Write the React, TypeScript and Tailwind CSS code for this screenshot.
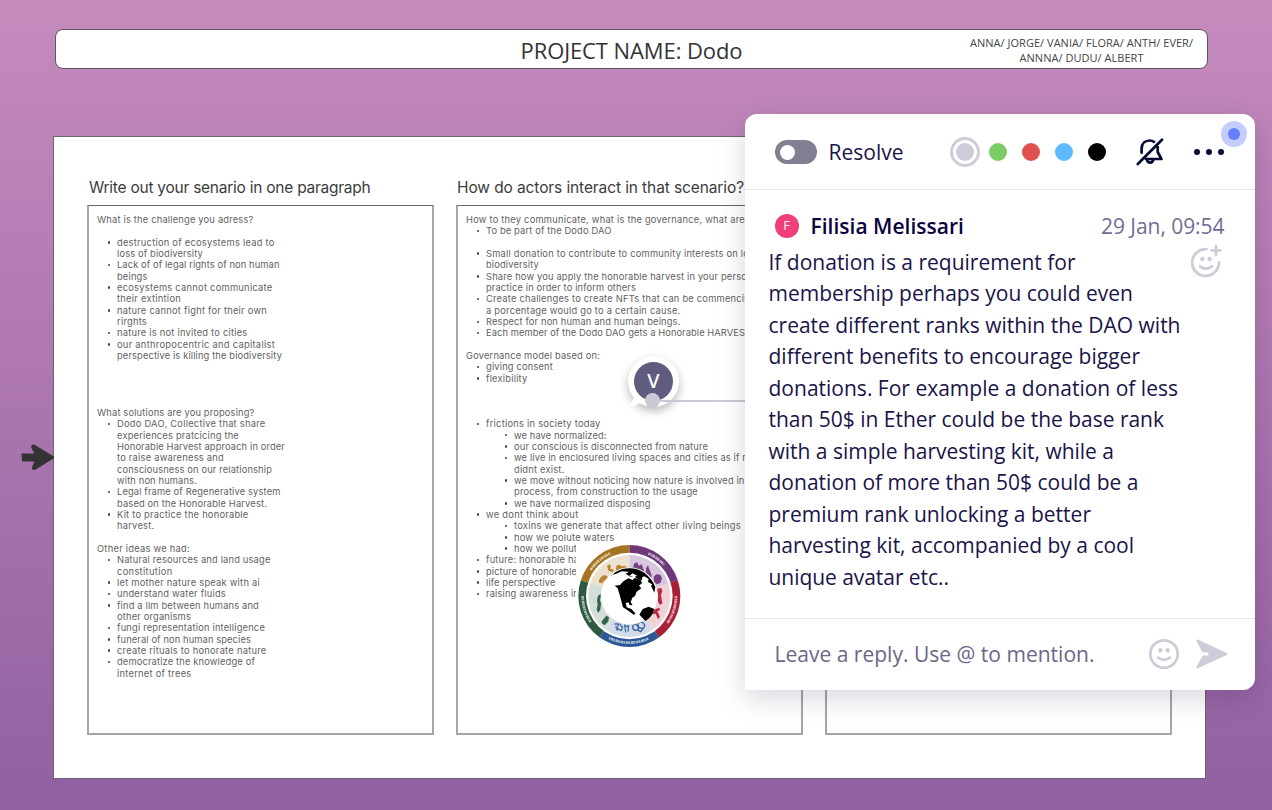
import { useLayoutEffect, useRef } from "react";

type FitProps = { text: string; w: number; className?: string };

// Tracks a line of text so that it fills exactly `w` pixels.
function Fit({ text, w, className = "" }: FitProps) {
  const ref = useRef<HTMLSpanElement>(null);
  useLayoutEffect(() => {
    const el = ref.current;
    if (!el) return;
    el.style.letterSpacing = "0px";
    const natural = el.getBoundingClientRect().width;
    el.style.letterSpacing = `${(w - natural) / text.length}px`;
  }, [text, w]);
  return (
    <span ref={ref} className={`inline-block whitespace-pre ${className}`}>
      {text}
    </span>
  );
}

// [indent level, text, width, bulleted]
type Row = [number, string, number, boolean?] | null;

const scenario: Row[] = [
  [0, "What is the challenge you adress?", 156.5],
  null,
  [1, "destruction of ecosystems lead to", 157.5, true],
  [1, "loss of biodiversity", 86],
  [1, "Lack of of legal rights of non human", 162.5, true],
  [1, "beings", 30.5],
  [1, "ecosystems cannot communicate", 155.5, true],
  [1, "their extintion", 64],
  [1, "nature cannot fight for their own", 150, true],
  [1, "rirghts", 30],
  [1, "nature is not invited to cities", 130.5, true],
  [1, "our anthropocentric and capitalist", 158, true],
  [1, "perspective is killing the biodiversity", 165],
  null,
  null,
  null,
  null,
  [0, "What solutions are you proposing?", 157.5],
  [1, "Dodo DAO, Collective that share", 148.5, true],
  [1, "experiences pratcicing the", 122],
  [1, "Honorable Harvest approach in order", 168],
  [1, "to raise awareness and", 107],
  [1, "consciousness on our relationship", 155],
  [1, "with non humans.", 80],
  [1, "Legal frame of Regenerative system", 163.5, true],
  [1, "based on the Honorable Harvest.", 150],
  [1, "Kit to practice the honorable", 131.5, true],
  [1, "harvest.", 37.5],
  null,
  [0, "Other ideas we had:", 93],
  [1, "Natural resources and land usage", 153.5, true],
  [1, "constitution", 55.5],
  [1, "let mother nature speak with ai", 143, true],
  [1, "understand water fluids", 109, true],
  [1, "find a llm between humans and", 142, true],
  [1, "other organisms", 74],
  [1, "fungi representation intelligence", 148, true],
  [1, "funeral of non human species", 134, true],
  [1, "create rituals to honorate nature", 149.5, true],
  [1, "democratize the knowledge of", 138, true],
  [1, "internet of trees", 74.5],
];

const actors: Row[] = [
  [0, "How to they communicate, what is the governance, what are", 279],
  [1, "To be part of the Dodo DAO", 125.5, true],
  null,
  [1, "Small donation to contribute to community interests on lo", 263, true],
  [1, "biodiversity", 53],
  [1, "Share how you apply the honorable harvest in your perso", 261, true],
  [1, "practice in order to inform others", 150],
  [1, "Create challenges to create NFTs that can be commencin", 264, true],
  [1, "a porcentage would go to a certain cause.", 194.5],
  [1, "Respect for non human and human beings.", 194.5, true],
  [1, "Each member of the Dodo DAO gets a Honorable HARVES", 259, true],
  null,
  [0, "Governance model based on:", 134],
  [1, "giving consent", 67, true],
  [1, "flexibility", 41.5, true],
  null,
  null,
  null,
  [1, "frictions in society today", 114.5, true],
  [2, "we have normalized:", 92.5, true],
  [2, "our conscious is disconnected from nature", 194, true],
  [2, "we live in enclosured living spaces and cities as if n", 234, true],
  [2, "didnt exist.", 50.5],
  [2, "we move without noticing how nature is involved in", 230.5, true],
  [2, "process, from construction to the usage", 184],
  [2, "we have normalized disposing", 136.5, true],
  [1, "we dont think about", 92.5, true],
  [2, "toxins we generate that affect other living beings", 227, true],
  [2, "how we polute waters", 100.5, true],
  [2, "how we pollut", 63, true],
  [1, "future: honorable ha", 93, true],
  [1, "picture of honorable", 91, true],
  [1, "life perspective", 69.5, true],
  [1, "raising awareness in", 93, true],
];

const indents = ["pl-0", "pl-[20px]", "pl-[48px]"];

function Rows({ rows }: { rows: Row[] }) {
  return (
    <div className="flex flex-col font-['Inter'] text-[9.3px] leading-[11.35px] text-[#626262]">
      {rows.map((r, i) =>
        r ? (
          <div key={i} className={`flex h-[11.35px] shrink-0 items-center ${indents[r[0]]}`}>
            {r[3] && <i className="-ml-[9.5px] mr-[7px] size-[2.5px] shrink-0 rounded-full bg-[#444]" />}
            <Fit text={r[1]} w={r[2]} />
          </div>
        ) : (
          <div key={i} className="h-[11.35px] shrink-0" />
        )
      )}
    </div>
  );
}

function Column({ title, titleWidth, rows, inset }: { title: string; titleWidth: number; rows: Row[]; inset: string }) {
  return (
    <section className="w-[347px] shrink-0">
      <h2 className={`flex h-[68px] items-end pb-[7px] font-['Inter'] text-[15.5px] leading-[20px] text-[#3c3c3c] ${inset}`}>
        {title && <Fit text={title} w={titleWidth} />}
      </h2>
      <div className="h-[530px] overflow-hidden border-2 border-t border-[#a6a6a6] border-t-[#666] pl-[8px] pt-[8px]">
        <Rows rows={rows} />
      </div>
    </section>
  );
}

function Wheel() {
  const sectors: [string, string][] = [
    ["#6d3878", "#d7c6dc"],
    ["#a91f35", "#efd3d7"],
    ["#2c5797", "#d4dcea"],
    ["#2c5940", "#d5dfda"],
    ["#a47420", "#ede2d0"],
  ];
  const pt = (r: number, deg: number) => {
    const a = ((deg - 90) * Math.PI) / 180;
    return `${160 + r * Math.cos(a)} ${159 + r * Math.sin(a)}`;
  };
  const wedge = (r: number, i: number) => `M160 159L${pt(r, i * 72)}A${r} ${r} 0 0 1 ${pt(r, i * 72 + 72)}Z`;
  return (
    <svg viewBox="0 0 318 318" className="size-[106px]">
      <rect width="318" height="318" fill="#fff" />
      {sectors.map((s, i) => (
        <path key={i} d={wedge(153, i)} fill={s[0]} />
      ))}
      <circle cx="160" cy="159" r="130" fill="#fff" />
      {sectors.map((s, i) => (
        <path key={i} d={wedge(123, i)} fill={s[1]} />
      ))}
      <g fill="none" stroke="#fff" strokeWidth="8" strokeOpacity=".6" strokeDasharray="7 2 4 1 9 2 5 1">
        <path d={`M${pt(140, -56)}A140 140 0 0 1 ${pt(140, -24)}`} />
        <path d={`M${pt(140, 24)}A140 140 0 0 1 ${pt(140, 48)}`} />
        <path d={`M${pt(140, 90)}A140 140 0 0 1 ${pt(140, 126)}`} />
        <path d={`M${pt(140, 156)}A140 140 0 0 1 ${pt(140, 206)}`} />
        <path d={`M${pt(140, 236)}A140 140 0 0 1 ${pt(140, 270)}`} />
      </g>
      <g fill="#b8842b">
        <path d="M69 112l5-9 10-7 10 3 1 9-9 4-9 9-8-2zM93 70l7-6 5 5-3 8 10 2v8l-14-3zM121 68l9-3 6 5 10-2 8 6 2 8-18-1-8 4-10-4z" />
      </g>
      <g fill="#764183">
        <path d="M166 75l6-3 2-10 9-5 5 11 9-4 6 16 3 10-12 5-24-11zM210 76l6-9 4 12 7 18-3 13-15-9zM233 101l8-7 12 1 5 11-5 14-11 4-8-8z" />
      </g>
      <g fill="#ba2942">
        <path d="M242 138l14-3 3 9-4 11 4 27-8 3-6-11 1-14zM230 202l19-8 4 7-9 4 8 16-6 8-7-17-9 2z" />
      </g>
      <g fill="none" stroke="#4a73ac" strokeWidth="4">
        <path d="M115 243h13l-5 12 12 8M119 250l5 13M131 244l8 8-3 12M146 243l3 25M143 251l16-2M158 246l-2 20" />
        <path
          stroke="#315f9f"
          d="M170 249q8-10 15 0t-5 13q-11 0-10-13M186 241q12-8 18 2t-6 13q-13 0-12-15M184 261l10 5 8-9"
        />
      </g>
      <g fill="#316548">
        <path d="M66 158l9-6v9l-3 9 3 12-2 18-7 10-4-11 3-13-2-14zM77 235l14-17 8 5-2 12-10 11-8-3z" />
      </g>
      <circle cx="160" cy="159" r="86" fill="#fff" stroke="#999" strokeWidth="1.5" strokeDasharray="3 4" />
      <path
        d="M104 103q10-18 36-25 35-8 65 11 25 20 33 43l-3 17-10-21 4-4-13-7 2-9-13-8-13 5-10-11-18-7-27-2-18 8-12 3zM132 126l10-11 15-9 13 5 6-6 18 5 4 10-9 8 7 8-14 10-5 13-8 5-5 14 6 9-9-1-4-8-8 2 3 13 14 5 12 13-4 5-16-12-17-11-4-15-6-22-6-20-9-8z"
        fill="#000"
      />
      <path d="M190 215l10-17 18-7 17 7q-6 24-27 36l-9-10zM149 92l15-8 18 5 3 8 14 2-1 12-12-2-10-8-12 1z" fill="#000" />
      <path d="M160 99l10-8 13 7-8 5z" fill="#fff" />
    </svg>
  );
}

const commentLines: [string, number][] = [
  ["If donation is a requirement for", 307],
  ["membership perhaps you could even", 364.5],
  ["create different ranks within the DAO with", 412],
  ["different benefits to encourage bigger", 371.5],
  ["donations. For example a donation of less", 409.5],
  ["than 50$ in Ether could be the base rank", 395.5],
  ["with a simple harvesting kit, while a", 345.5],
  ["donation of more than 50$ could be a", 370],
  ["premium rank unlocking a better", 322.5],
  ["harvesting kit, accompanied by a cool", 365.5],
  ["unique avatar etc..", 180.5],
];

function Smile({ plus = false }: { plus?: boolean }) {
  return (
    <svg viewBox="0 0 34 34" className="size-[34px]" fill="none" stroke="#cfccd9" strokeWidth="2.8" strokeLinecap="round">
      {plus ? <path d="M17.5 5.2A13.4 13.4 0 1 0 30 18.5M27 1.8v9M22.5 6.3h9" /> : <circle cx="17" cy="17" r="13.7" />}
      <g transform={plus ? "translate(0 1.8)" : undefined}>
        <path d="M11 20.5q6 4.6 12 0" />
        <circle cx="13.4" cy="13.2" r="2.2" fill="#cfccd9" stroke="none" />
        <circle cx="20.6" cy="13.2" r="2.2" fill="#cfccd9" stroke="none" />
      </g>
    </svg>
  );
}

function CommentPanel() {
  return (
    <aside className="absolute left-[744.5px] top-[113.5px] flex h-[576px] w-[510px] flex-col rounded-[12px] rounded-bl-none bg-white font-['Open_Sans'] text-[#1a1449] shadow-[0_8px_28px_rgba(5,0,56,0.16)]">
      <header className="flex h-[76px] shrink-0 items-center border-b border-[#e9e9ec] pl-[30px] pt-[2px]">
        <span className="flex h-[24px] w-[42px] items-center rounded-full bg-[#827f92] pl-[5px]">
          <i className="size-[15px] rounded-full bg-white" />
        </span>
        <span className="ml-[12px] w-[121px] text-[21px] leading-[30px]">
          <Fit text="Resolve" w={75} />
        </span>
        <span className="flex size-[30px] items-center justify-center rounded-full border-[3px] border-[#cfccd9]">
          <i className="size-[18px] rounded-full bg-[#cfccd9]" />
        </span>
        <span className="ml-[9.5px] flex gap-[15px]">
          <i className="size-[18px] rounded-full bg-[#7acc66]" />
          <i className="size-[18px] rounded-full bg-[#e05252]" />
          <i className="size-[18px] rounded-full bg-[#5fbaff]" />
          <i className="size-[18px] rounded-full bg-black" />
        </span>
        <svg viewBox="0 0 28 28" className="ml-[29.5px] size-[28px]" fill="none" stroke="#050a35" strokeWidth="2.7" strokeLinecap="round" strokeLinejoin="round">
          <path d="M1.8 26L26 1.7M5.6 14.8V10.5C5.6 5.5 9 2.5 13.6 2.5Q16.2 2.5 18 3.8M21.7 9.2V14L25.4 21H10M11 22.2a3.2 3.2 0 0 0 6.2 0" />
        </svg>
        <span className="ml-[30px] flex gap-[6px]">
          <i className="size-[6px] rounded-full bg-[#050a35]" />
          <i className="size-[6px] rounded-full bg-[#050a35]" />
          <i className="size-[6px] rounded-full bg-[#050a35]" />
        </span>
      </header>
      <div className="flex h-[429px] shrink-0 flex-col border-b border-[#e9e9ec] pt-[21px]">
        <div className="flex h-[31px] items-center pl-[30px] pr-[30px]">
          <span className="flex size-[24px] items-center justify-center rounded-full bg-[#ee3f78] text-[13px] text-white/90">F</span>
          <span className="ml-[12px] text-[21px] font-semibold leading-[30px] text-[#0a0440]">
            <Fit text="Filisia Melissari" w={153.5} />
          </span>
          <span className="ml-auto text-[21px] leading-[30px] text-[#716e92]">
            <Fit text="29 Jan, 09:54" w={123.5} />
          </span>
        </div>
        <div className="flex justify-between pl-[24px] pr-[31.5px]">
          <div className="flex flex-col pt-[5px] text-[21px] leading-[31.5px]">
            {commentLines.map(([t, w]) => (
              <Fit key={t} text={t} w={w} className="self-start" />
            ))}
          </div>
          <div className="pt-[2px]">
            <Smile plus />
          </div>
        </div>
      </div>
      <footer className="flex flex-1 items-center pl-[30px] pr-[26.5px]">
        <span className="text-[21px] leading-[30px] text-[#6a6789]">
          <Fit text="Leave a reply. Use @ to mention." w={320} />
        </span>
        <span className="ml-auto">
          <Smile />
        </span>
        <svg viewBox="0 0 32 30" className="ml-[15px] h-[30px] w-[32px]" fill="#cfccd9">
          <path d="M.6 2.3C0 .9 1 .2 2.4.8L30.7 13.9c1.1.5 1.1 1.5 0 2L2.4 29C1 29.6 0 28.7.6 27.5L6.7 16.5H11a1.6 1.6 0 0 0 0-3.2H6.3z" />
        </svg>
      </footer>
      <i className="absolute top-[7px] right-[8px] flex size-[26px] items-center justify-center rounded-full bg-[#c4cefe]">
        <i className="size-[12px] rounded-full bg-[#667eff]" />
      </i>
    </aside>
  );
}

export default function App() {
  return (
    <main className="relative h-[810px] w-[1272px] overflow-hidden bg-linear-to-b from-[#c68bbd] to-[#9260a1] pt-[29px]">
      <header className="ml-[55px] grid h-[40px] w-[1153px] grid-cols-[1fr_auto_1fr] items-center rounded-[8px] border border-[#5d5560] bg-white pt-[2px] font-['Open_Sans'] text-[#333]">
        <span />
        <h1 className="text-[22px] leading-[30px]">
          <Fit text="PROJECT NAME: Dodo" w={222} />
        </h1>
        <div className="flex flex-col items-center justify-self-end pr-[14px] text-[11px] leading-[15px] text-[#444]">
          <Fit text="ANNA/ JORGE/ VANIA/ FLORA/ ANTH/ EVER/" w={223} />
          <Fit text="ANNNA/ DUDU/ ALBERT" w={124} />
        </div>
      </header>

      <div className="ml-[53px] mt-[67px] flex h-[643px] w-[1153px] gap-[22px] border border-[#6b6570] bg-white pl-[33px]">
        <Column title="Write out your senario in one paragraph" titleWidth={281.5} rows={scenario} inset="pl-[2px]" />
        <Column title="How do actors interact in that scenario?" titleWidth={287} rows={actors} inset="pl-[1px]" />
        <Column title="" titleWidth={0} rows={[]} inset="pl-[2px]" />
      </div>

      <svg viewBox="0 0 34 28" className="absolute left-[21px] top-[443px] h-[28px] w-[34px]" fill="#333">
        <path d="M.5 10.5h12.8L10.4 5C9.4 2.3 11.5.8 14 2L32.4 13.2c1 .7 1 1.6 0 2.2L14.8 26.6c-2.6 1.2-4.6-.5-3.6-3.1L13.4 18.6H1z" />
      </svg>

      <div className="absolute left-[576px] top-[543px]">
        <Wheel />
      </div>

      <div className="absolute left-[628px] top-[355.5px] flex size-[51px] items-center justify-center rounded-full bg-white shadow-[0_4px_10px_rgba(0,0,0,0.28)]">
        <svg viewBox="0 0 20 16" className="absolute bottom-0 left-[1px] h-[16px] w-[20px]" fill="#fff">
          <path d="M3 2L5 7 1.4 12.5C.6 14.7 2 15.8 4 15.2L10 12.5 19 14 14 2z" />
        </svg>
        <span className="z-10 flex size-[39px] items-center justify-center rounded-full bg-[#605c80] font-['Noto_Sans'] text-[20px] font-medium text-white">
          V
        </span>
        <i className="absolute -bottom-px left-[17px] z-20 size-[15px] rounded-full bg-[#cbc8d6]" />
      </div>
      <div className="absolute left-[660px] top-[400px] h-[2px] w-[85px] bg-[#cbc8d6]" />

      <CommentPanel />
    </main>
  );
}
